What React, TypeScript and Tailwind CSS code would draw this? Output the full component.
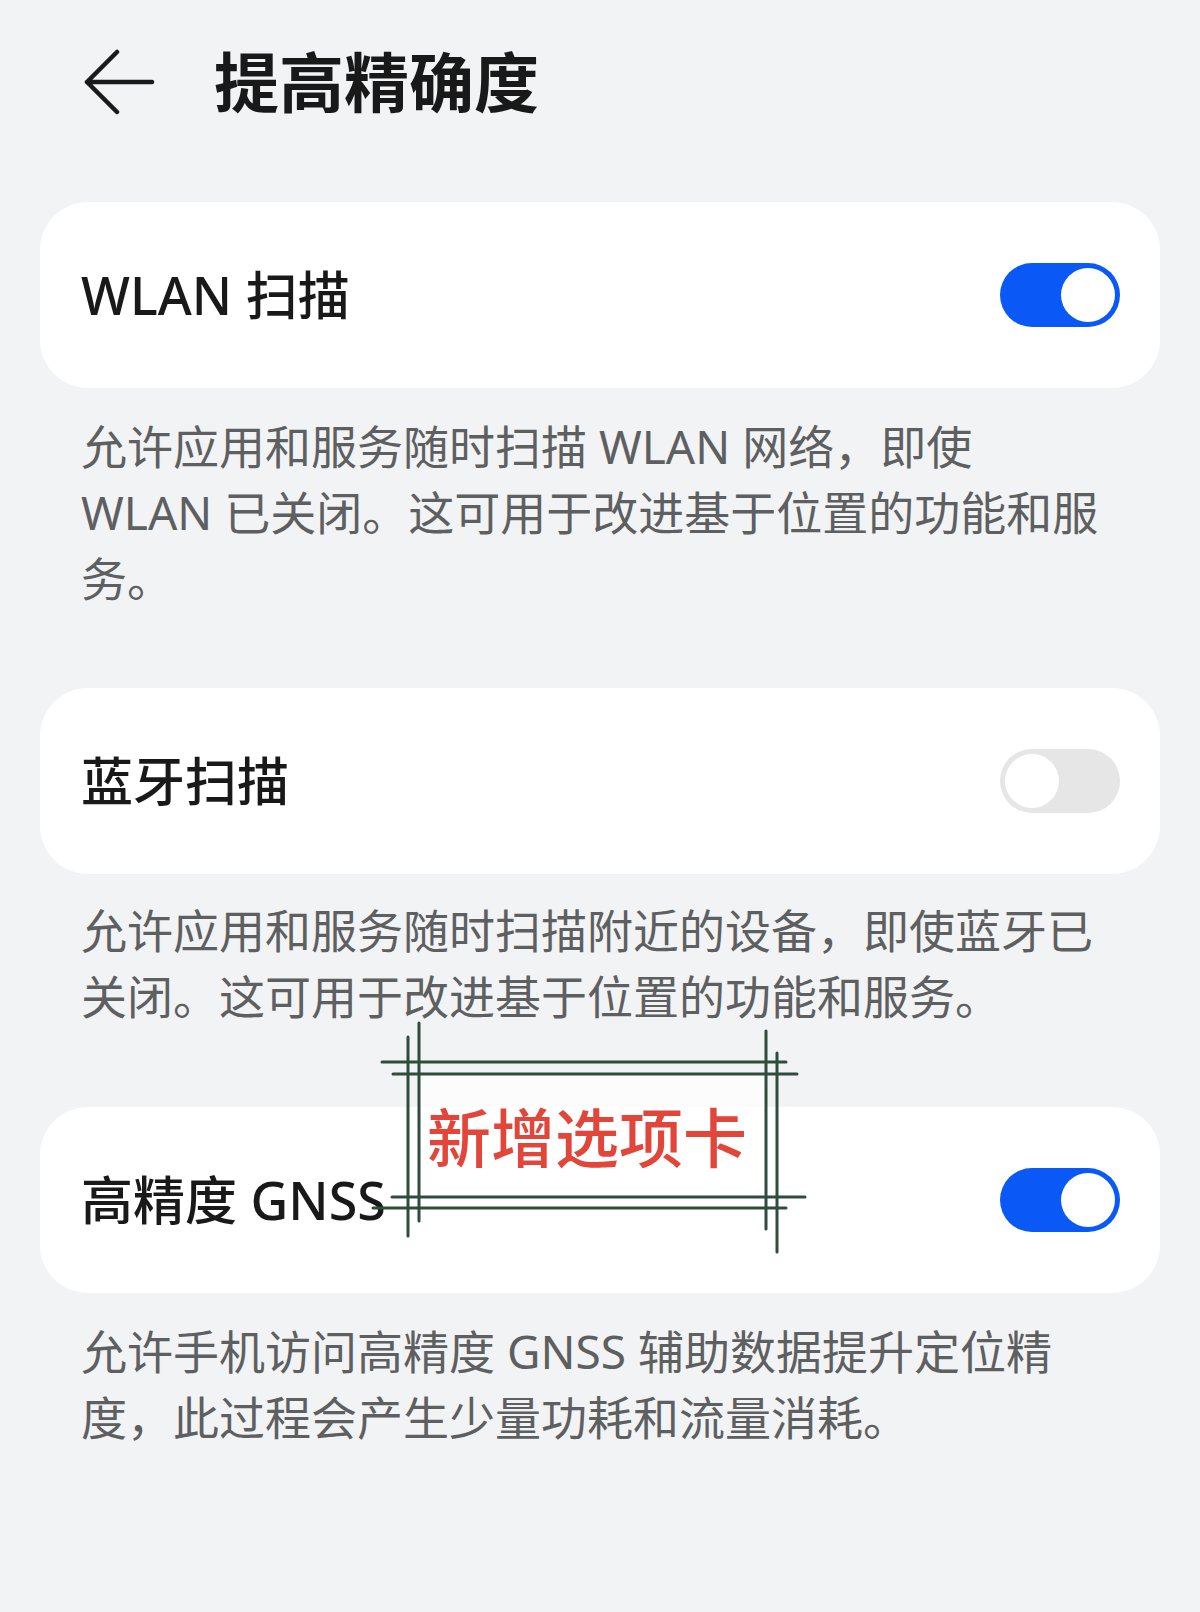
const FONT = "font-[family-name:'Noto_Sans','Noto_Sans_CJK_SC',sans-serif]";

function Toggle({ on }: { on: boolean }) {
  return (
    <div
      className={`w-[120px] h-[64px] rounded-full p-[5px] flex ${
        on ? "bg-[#0a59f7] justify-end" : "bg-[#e6e6e6] justify-start"
      }`}
    >
      <div className="w-[54px] h-[54px] rounded-full bg-white" />
    </div>
  );
}

function SettingCard({ title, on }: { title: string; on: boolean }) {
  return (
    <div className="bg-white rounded-[48px] h-[186px] flex items-center justify-between pl-[41px] pr-[40px]">
      <span className="text-[52px] leading-[64px] font-medium text-[#191919]">
        {title}
      </span>
      <Toggle on={on} />
    </div>
  );
}

function Desc({ lines }: { lines: string[] }) {
  return (
    <p className="px-[41px] text-[46px] leading-[66px] text-[#5e5f60] whitespace-nowrap">
      {lines.map((l, i) => (
        <span key={i}>
          {l}
          {i < lines.length - 1 && <br />}
        </span>
      ))}
    </p>
  );
}

export default function App() {
  return (
    <div className={`relative w-full min-h-[1612px] bg-[#f1f3f5] ${FONT} overflow-hidden`}>
      {/* Header */}
      <div className="flex items-center h-[72px] mt-[46px] pl-[84px]">
        <svg width="72" height="72" viewBox="0 0 72 72" fill="none">
          <path
            d="M33 6 L3 36 L33 66 M3 36 H68"
            stroke="#1a1a1a"
            strokeWidth="4.5"
            strokeLinecap="round"
            strokeLinejoin="round"
          />
        </svg>
        <h1 className="ml-[58px] text-[65px] leading-[72px] font-bold text-[#191919]">
          提高精确度
        </h1>
      </div>

      <div className="px-[40px] mt-[84px]">
        <SettingCard title="WLAN 扫描" on />
        <div className="mt-[25px]">
          <Desc
            lines={[
              "允许应用和服务随时扫描 WLAN 网络，即使",
              "WLAN 已关闭。这可用于改进基于位置的功能和服",
              "务。",
            ]}
          />
        </div>

        <div className="mt-[77px]">
          <SettingCard title="蓝牙扫描" on={false} />
        </div>
        <div className="mt-[23px]">
          <Desc
            lines={[
              "允许应用和服务随时扫描附近的设备，即使蓝牙已",
              "关闭。这可用于改进基于位置的功能和服务。",
            ]}
          />
        </div>

        <div className="mt-[78px]">
          <SettingCard title="高精度 GNSS" on />
        </div>
        <div className="mt-[25px]">
          <Desc
            lines={[
              "允许手机访问高精度 GNSS 辅助数据提升定位精",
              "度，此过程会产生少量功耗和流量消耗。",
            ]}
          />
        </div>
      </div>

      {/* Annotation overlay */}
      <svg
        className="absolute left-0 top-0 pointer-events-none"
        width="1200"
        height="1612"
        viewBox="0 0 1200 1612"
      >
        <rect x="419" y="1074" width="347" height="123" fill="#ffffff" fillOpacity="0.75" />
        <g stroke="#2e4d3d" strokeWidth="3" strokeLinecap="round">
          <line x1="382" y1="1062" x2="786" y2="1062" />
          <line x1="393" y1="1074" x2="797" y2="1074" />
          <line x1="392" y1="1197" x2="805" y2="1197" />
          <line x1="373" y1="1208" x2="786" y2="1208" />
          <line x1="408" y1="1037" x2="408" y2="1236" />
          <line x1="419" y1="1023" x2="419" y2="1221" />
          <line x1="766" y1="1031" x2="766" y2="1229" />
          <line x1="777" y1="1053" x2="777" y2="1252" />
        </g>
      </svg>
      <div className="absolute left-[427px] top-[1102px] text-[64px] leading-[64px] font-medium text-[#e2463b] whitespace-nowrap font-[family-name:'Noto_Sans_CJK_SC',sans-serif]">
        新增选项卡
      </div>
    </div>
  );
}
